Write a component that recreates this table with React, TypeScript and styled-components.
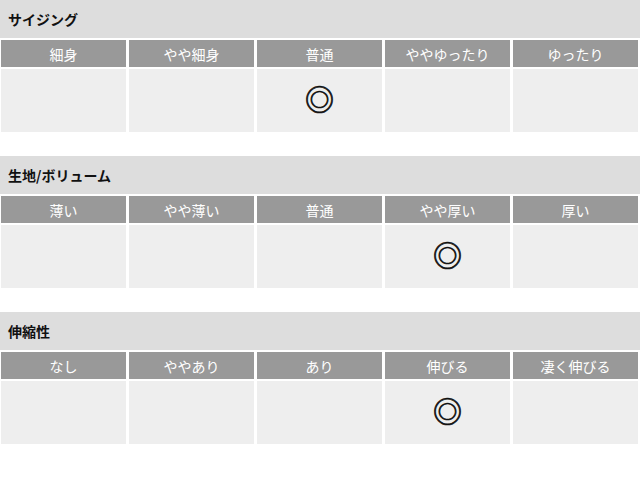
import React from "react";
import styled, { createGlobalStyle } from "styled-components";

const GlobalStyle = createGlobalStyle`
  html, body {
    margin: 0;
    padding: 0;
    background: #fff;
    font-family: "Noto Sans CJK JP", "Noto Sans", sans-serif;
  }
`;

const Wrapper = styled.div`
  width: 640px;
`;

const Section = styled.section`
  margin-bottom: 24px;
`;

const Title = styled.h3`
  margin: 0;
  height: 38px;
  display: flex;
  align-items: center;
  padding-left: 8px;
  background-color: #dddddd;
  color: #111;
  font-size: 14px;
  font-weight: bold;
`;

const Grid = styled.div`
  display: grid;
  grid-template-columns: repeat(5, 1fr);
  grid-template-rows: 27px 63px;
  column-gap: 3px;
  row-gap: 2px;
  margin-top: 2px;
  padding: 0 2px 0 1px;
`;

const HeadCell = styled.div`
  display: flex;
  align-items: center;
  justify-content: center;
  background-color: #999999;
  color: #ffffff;
  font-size: 14px;
`;

const BodyCell = styled.div`
  display: flex;
  align-items: center;
  justify-content: center;
  padding-bottom: 4px;
  background-color: #eeeeee;
  color: #111;
  font-size: 29px;
  line-height: 1;
  -webkit-text-stroke: 0.7px #111;
`;

interface IScale {
  title: string;
  labels: string[];
  selected: number;
}

const scales: IScale[] = [
  {
    title: "サイジング",
    labels: ["細身", "やや細身", "普通", "ややゆったり", "ゆったり"],
    selected: 2,
  },
  {
    title: "生地/ボリューム",
    labels: ["薄い", "やや薄い", "普通", "やや厚い", "厚い"],
    selected: 3,
  },
  {
    title: "伸縮性",
    labels: ["なし", "ややあり", "あり", "伸びる", "凄く伸びる"],
    selected: 3,
  },
];

function App() {
  return (
    <Wrapper>
      <GlobalStyle />
      {scales.map((scale) => (
        <Section key={scale.title}>
          <Title>{scale.title}</Title>
          <Grid>
            {scale.labels.map((label) => (
              <HeadCell key={label}>{label}</HeadCell>
            ))}
            {scale.labels.map((label, i) => (
              <BodyCell key={label}>{i === scale.selected ? "◎" : ""}</BodyCell>
            ))}
          </Grid>
        </Section>
      ))}
    </Wrapper>
  );
}

export default App;
